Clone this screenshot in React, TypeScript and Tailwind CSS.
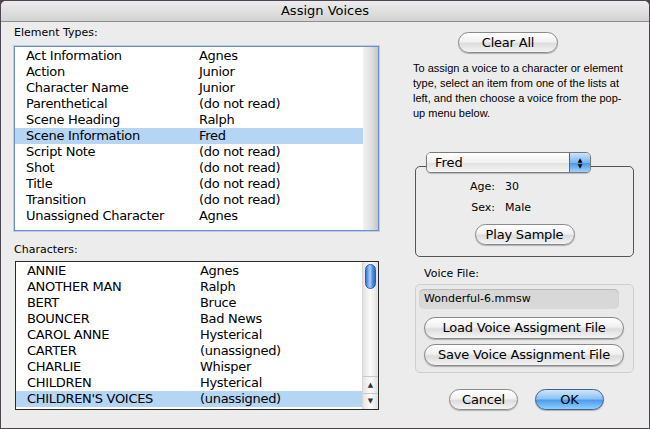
import React from "react";

interface Row {
  name: string;
  voice: string;
}

const elementTypes: Row[] = [
  { name: "Act Information", voice: "Agnes" },
  { name: "Action", voice: "Junior" },
  { name: "Character Name", voice: "Junior" },
  { name: "Parenthetical", voice: "(do not read)" },
  { name: "Scene Heading", voice: "Ralph" },
  { name: "Scene Information", voice: "Fred" },
  { name: "Script Note", voice: "(do not read)" },
  { name: "Shot", voice: "(do not read)" },
  { name: "Title", voice: "(do not read)" },
  { name: "Transition", voice: "(do not read)" },
  { name: "Unassigned Character", voice: "Agnes" },
];

const characters: Row[] = [
  { name: "ANNIE", voice: "Agnes" },
  { name: "ANOTHER MAN", voice: "Ralph" },
  { name: "BERT", voice: "Bruce" },
  { name: "BOUNCER", voice: "Bad News" },
  { name: "CAROL ANNE", voice: "Hysterical" },
  { name: "CARTER", voice: "(unassigned)" },
  { name: "CHARLIE", voice: "Whisper" },
  { name: "CHILDREN", voice: "Hysterical" },
  { name: "CHILDREN'S VOICES", voice: "(unassigned)" },
];

const help = [
  "To assign a voice to a character or element",
  "type, select an item from one of the lists at",
  "left, and then choose a voice from the pop-",
  "up menu below.",
];

function ListRows({ rows, selected }: { rows: Row[]; selected: string }) {
  return (
    <div className="flex flex-col flex-1">
      {rows.map((row) => (
        <div
          key={row.name}
          className={
            "flex items-center h-4 pl-[11px] text-[13px] leading-4 tracking-[-0.3px] text-black " +
            (row.name === selected ? "bg-[#b5d5f5]" : "")
          }
        >
          <span className="w-[173px] shrink-0">{row.name}</span>
          <span>{row.voice}</span>
        </div>
      ))}
    </div>
  );
}

function AquaButton({
  label,
  className,
  blue,
}: {
  label: string;
  className: string;
  blue?: boolean;
}) {
  return (
    <div
      className={
        "flex items-center justify-center rounded-full border text-[13px] tracking-[-0.2px] text-black shadow-[0_1px_1px_rgba(0,0,0,0.25)] " +
        (blue
          ? "border-[#3b5f8f] bg-[linear-gradient(to_bottom,#cfe6fb_0%,#8ec3f3_45%,#4f9cec_55%,#8fd0ff_100%)] "
          : "border-[#8a8a8a] bg-[linear-gradient(to_bottom,#ffffff_0%,#f1f1f1_45%,#dcdcdc_55%,#f4f4f4_100%)] ") +
        className
      }
    >
      {label}
    </div>
  );
}

export default function App() {
  return (
    <div
      className="w-[650px] h-[429px] bg-[#4d4650] p-[1px] overflow-hidden"
      style={{ fontFamily: '"DejaVu Sans", "Liberation Sans", sans-serif' }}
    >
      <div className="flex flex-col w-full h-full bg-[#ececec] rounded-t-[5px] overflow-hidden">
        {/* title bar */}
        <div className="flex items-center justify-center h-[21px] shrink-0 border-b border-[#8e8e8e] bg-[linear-gradient(to_bottom,#ececec,#d3d3d3)] text-[13px] text-black">
          Assign Voices
        </div>

        <div className="flex flex-1">
          {/* left column */}
          <div className="flex flex-col w-[365px] ml-[13px]">
            <div className="mt-[4px] h-[14px] text-[11px] leading-[14px]">Element Types:</div>
            <div className="flex mt-[6px] h-[185px] border border-[#6f8fbd] bg-white shadow-[0_0_0_1px_#b9cde6]">
              <div className="pt-[1px] flex-1 flex">
                <ListRows rows={elementTypes} selected="Scene Information" />
              </div>
              <div className="w-[15px] bg-[linear-gradient(to_right,#f2f2f2,#dedede_60%,#c4c4c4)]"></div>
            </div>

            <div className="mt-[12px] h-[14px] text-[11px] leading-[14px]">Characters:</div>
            <div className="flex mt-[4px] h-[149px] border border-[#2a2a2a] bg-white ml-[1px]">
              <div className="pt-[1px] flex-1 flex">
                <ListRows rows={characters} selected="CHILDREN'S VOICES" />
              </div>
              <div className="flex flex-col w-[16px] border-l border-[#d6d6d6] bg-[linear-gradient(to_right,#e4e4e4,#fbfbfb_50%,#e0e0e0)]">
                <div className="mx-auto mt-[2px] h-[25px] w-[11px] rounded-full border border-[#2f5fa8] bg-[linear-gradient(to_right,#3a78d4,#a9d2fb_45%,#5593e0_70%,#2d67c4)]"></div>
                <div className="flex-1"></div>
                <div className="flex items-center justify-center h-[17px] border-t border-[#c8c8c8] text-[7px] text-[#333]">▲</div>
                <div className="flex items-center justify-center h-[16px] border-t border-[#c8c8c8] text-[7px] text-[#333]">▼</div>
              </div>
            </div>
          </div>

          {/* right column */}
          <div className="flex flex-col w-[220px] ml-[34px]">
            <AquaButton label="Clear All" className="mt-[10px] ml-[45px] w-[100px] h-[21px]" />
            <div
              className="mt-[8px] text-[11px] leading-[15px] text-black whitespace-nowrap"
              style={{ fontFamily: '"Liberation Sans", Arial, sans-serif' }}
            >
              {help.map((line) => (
                <div key={line}>{line}</div>
              ))}
            </div>

            {/* voice group */}
            <div className="relative mt-[45px] ml-[2px] h-[91px] w-[219px] rounded-[5px] border border-[#555]">
              <div className="absolute left-[10px] top-[-15px] flex h-[21px] w-[165px] rounded-[5px] border border-[#7a7a7a] bg-[#ececec] shadow-[0_1px_1px_rgba(0,0,0,0.2)] overflow-hidden">
                <div className="flex flex-1 items-center pl-[8px] text-[13px] bg-[linear-gradient(to_bottom,#ffffff,#f0f0f0_50%,#e2e2e2_55%,#f6f6f6)]">
                  Fred
                </div>
                <div className="flex flex-col items-center justify-center w-[21px] border-l border-[#3d6bb0] bg-[linear-gradient(to_bottom,#cde4fb,#7db6f0_50%,#4c97ea_55%,#9fd3ff)] text-[6px] leading-[6px] text-black">
                  <span>▲</span>
                  <span>▼</span>
                </div>
              </div>
              <div className="flex flex-col items-center pt-[13px] text-[11px] leading-[14px]">
                <div className="grid grid-cols-[auto_auto] gap-x-[10px] gap-y-[7px] -ml-[48px]">
                  <span className="text-right">Age:</span>
                  <span>30</span>
                  <span className="text-right">Sex:</span>
                  <span>Male</span>
                </div>
                <AquaButton label="Play Sample" className="mt-[9px] w-[100px] h-[21px]" />
              </div>
            </div>

            <div className="mt-[10px] ml-[11px] h-[14px] text-[11px] leading-[14px]">Voice File:</div>
            <div className="flex flex-col mt-[3px] ml-[2px] h-[89px] w-[219px] rounded-[5px] border border-[#cfcfcf] bg-[#e9e9e9]">
              <div className="mt-[4px] ml-[3px] flex items-center h-[20px] w-[200px] rounded-[5px] bg-[#d8d8d8] shadow-[inset_0_1px_1px_rgba(0,0,0,0.15)] pl-[5px] text-[11px]">
                Wonderful-6.mmsw
              </div>
              <AquaButton label="Load Voice Assigment File" className="mt-[8px] ml-[8px] w-[200px] h-[22px]" />
              <AquaButton label="Save Voice Assignment File" className="mt-[5px] ml-[8px] w-[200px] h-[22px]" />
            </div>

            <div className="flex mt-[16px] ml-[36px] gap-[17px]">
              <AquaButton label="Cancel" className="w-[69px] h-[21px]" />
              <AquaButton label="OK" blue className="w-[69px] h-[21px]" />
            </div>
          </div>
        </div>
      </div>
    </div>
  );
}
